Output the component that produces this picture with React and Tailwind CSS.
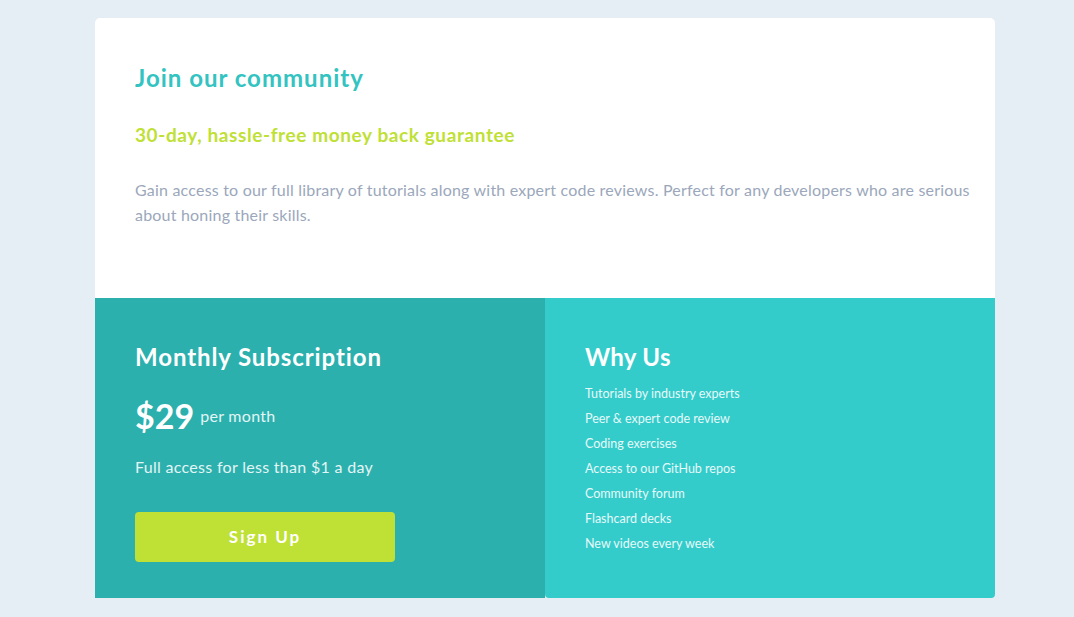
import React from "react";

const reasons = [
  "Tutorials by industry experts",
  "Peer & expert code review",
  "Coding exercises",
  "Access to our GitHub repos",
  "Community forum",
  "Flashcard decks",
  "New videos every week",
];

const App = () => {
  return (
    <main className="min-h-screen bg-[#e5eef5] pt-[18px] font-['Lato',sans-serif]">
      <div className="ml-[95px] w-[900px] rounded-t-[5px] overflow-hidden bg-white">
        {/* Top */}
        <section className="h-[280px] pl-10 pr-5 pt-[44px]">
          <h1 className="text-[24px] leading-[32px] font-bold tracking-[1px] text-[#33c3c1]">
            Join our community
          </h1>
          <h2 className="mt-[27px] text-[19px] leading-[28px] font-bold tracking-[0.6px] text-[#bfe035]">
            30-day, hassle-free money back guarantee
          </h2>
          <p className="mt-[28px] text-[16px] leading-[25px] tracking-[0.2px] text-[#9ba7bb]">
            Gain access to our full library of tutorials along with expert code
            reviews. Perfect for any developers who are serious about honing
            their skills.
          </p>
        </section>

        {/* Bottom */}
        <div className="grid grid-cols-2 h-[300px] bg-[#e5eef5]">
          <section className="bg-[#2bb0ae] pl-10 pt-[43px] text-white">
            <h2 className="text-[24px] leading-[32px] font-bold tracking-[0.9px]">
              Monthly Subscription
            </h2>
            <div className="mt-[23px] flex items-center gap-[6px]">
              <span className="text-[34px] leading-[40px] font-bold">$29</span>
              <span className="text-[16px] tracking-[0.3px] text-[#e3f5f4]">per month</span>
            </div>
            <p className="mt-[19px] text-[16px] leading-[24px] tracking-[0.3px] text-[#e3f5f4]">
              Full access for less than $1 a day
            </p>
            <button className="mt-[33px] w-[260px] h-[50px] rounded-[4px] bg-[#bfe035] text-[17px] font-bold tracking-[2px] text-white">
              Sign Up
            </button>
          </section>
          <section className="bg-[#33cccb] rounded-b-[4px] pl-10 pt-[43px] text-white">
            <h2 className="text-[24px] leading-[32px] font-bold tracking-[0.3px]">Why Us</h2>
            <ul className="mt-[8px]">
              {reasons.map((r) => (
                <li key={r} className="text-[12.5px] leading-[25px] text-[#e6f8f8]">
                  {r}
                </li>
              ))}
            </ul>
          </section>
        </div>
      </div>
    </main>
  );
};

export default App;
